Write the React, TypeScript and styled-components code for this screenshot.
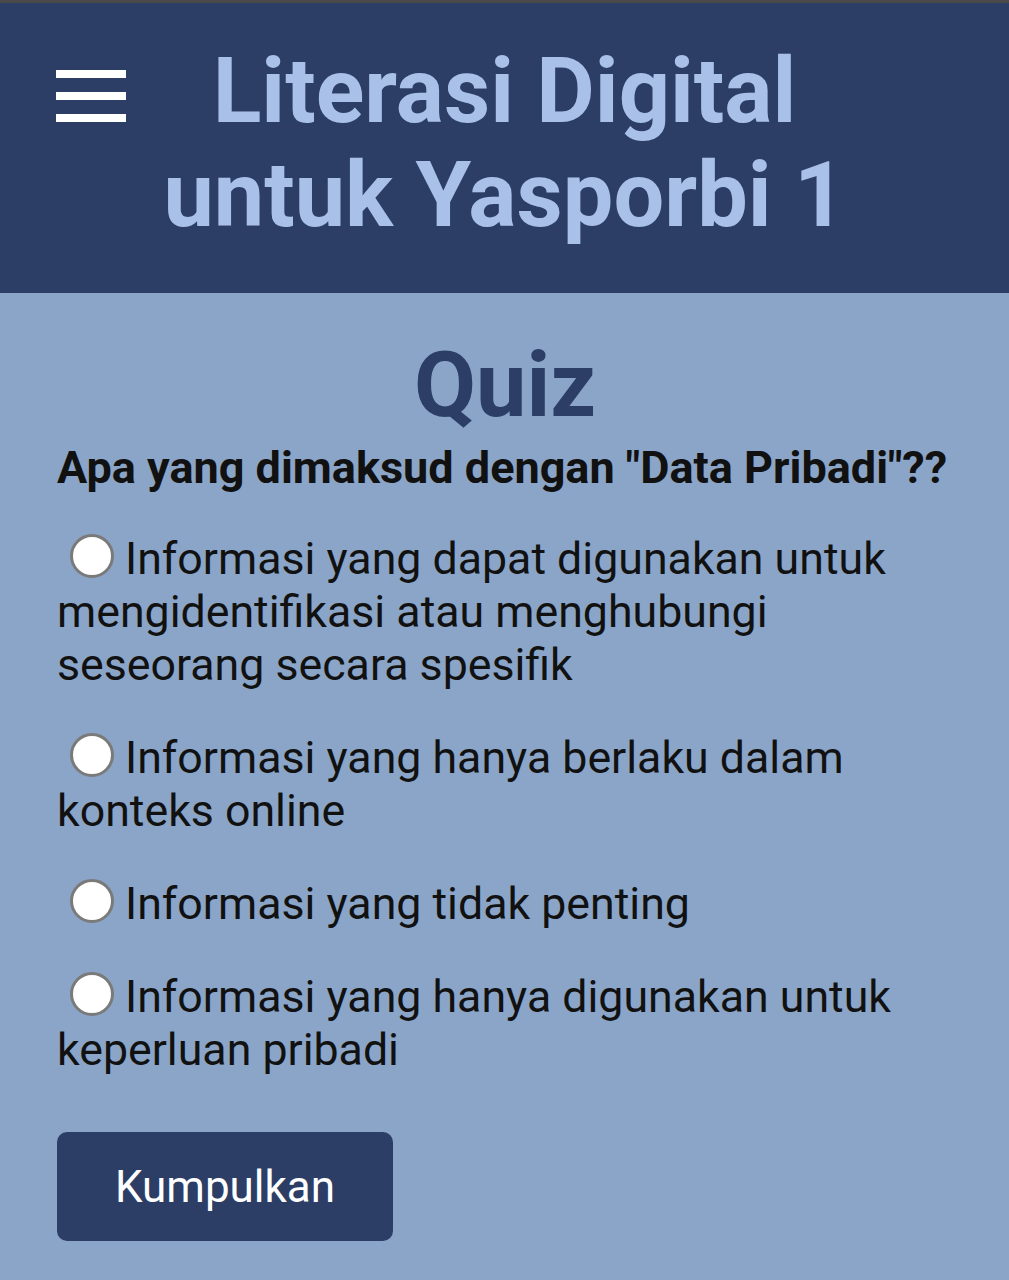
import React from "react";
import styled, { createGlobalStyle } from "styled-components";

const Global = createGlobalStyle`
  html, body { margin: 0; padding: 0; }
  body {
    background: #8aa5c7;
    font-family: Roboto, "Noto Sans", sans-serif;
    min-height: 1280px;
  }
`;

const Header = styled.header`
  display: grid;
  grid-template-columns: 1fr auto 1fr;
  align-items: start;
  background: #2c3e66;
  border-top: 3px solid #4a4a4a;
  padding: 37px 0 45px;
`;

const MenuButton = styled.div`
  justify-self: start;
  margin: 30px 0 0 56px;
  width: 70px;
  display: flex;
  flex-direction: column;
  gap: 14px;
`;

const Bar = styled.span`
  display: block;
  height: 8px;
  background: #ffffff;
`;

const Title = styled.h1`
  margin: 0;
  font-size: 90px;
  line-height: 104px;
  font-weight: 700;
  color: #a9c1e8;
  text-align: center;
`;

const Main = styled.main`
  padding: 41px 56px 38px 57px;
  display: flex;
  flex-direction: column;
  align-items: flex-start;
`;

const QuizHeading = styled.h2`
  align-self: stretch;
  margin: 0;
  text-align: center;
  font-size: 90px;
  line-height: 104px;
  font-weight: 700;
  color: #2c3e66;
`;

const Question = styled.p`
  margin: 5px 0 0;
  font-size: 45px;
  line-height: 50px;
  font-weight: 700;
  color: #111111;
`;

const Options = styled.div`
  display: flex;
  flex-direction: column;
  gap: 40px;
  margin-top: 40px;
`;

const Option = styled.label`
  display: block;
  font-size: 44.7px;
  line-height: 53px;
  color: #111111;
`;

const Radio = styled.input`
  appearance: none;
  -webkit-appearance: none;
  display: inline-block;
  box-sizing: border-box;
  width: 44px;
  height: 44px;
  margin: 0 11px 0 13px;
  border: 3px solid #7a7a7a;
  border-radius: 50%;
  background: #ffffff;
  vertical-align: -4px;
`;

const Submit = styled.button`
  margin-top: 55px;
  width: 336px;
  height: 109px;
  border: none;
  border-radius: 10px;
  background: #2c3e66;
  color: #ffffff;
  font-family: Roboto, "Noto Sans", sans-serif;
  font-size: 44px;
  font-weight: 400;
  padding: 0;
`;

const options = [
  "Informasi yang dapat digunakan untuk mengidentifikasi atau menghubungi seseorang secara spesifik",
  "Informasi yang hanya berlaku dalam konteks online",
  "Informasi yang tidak penting",
  "Informasi yang hanya digunakan untuk keperluan pribadi",
];

export default function App() {
  return (
    <>
      <Global />
      <Header>
        <MenuButton>
          <Bar />
          <Bar />
          <Bar />
        </MenuButton>
        <Title>
          Literasi Digital
          <br />
          untuk Yasporbi 1
        </Title>
        <div />
      </Header>
      <Main>
        <QuizHeading>Quiz</QuizHeading>
        <Question>Apa yang dimaksud dengan "Data Pribadi"??</Question>
        <Options>
          {options.map((o) => (
            <Option key={o}>
              <Radio type="radio" name="q1" />
              {o}
            </Option>
          ))}
        </Options>
        <Submit>Kumpulkan</Submit>
      </Main>
    </>
  );
}
